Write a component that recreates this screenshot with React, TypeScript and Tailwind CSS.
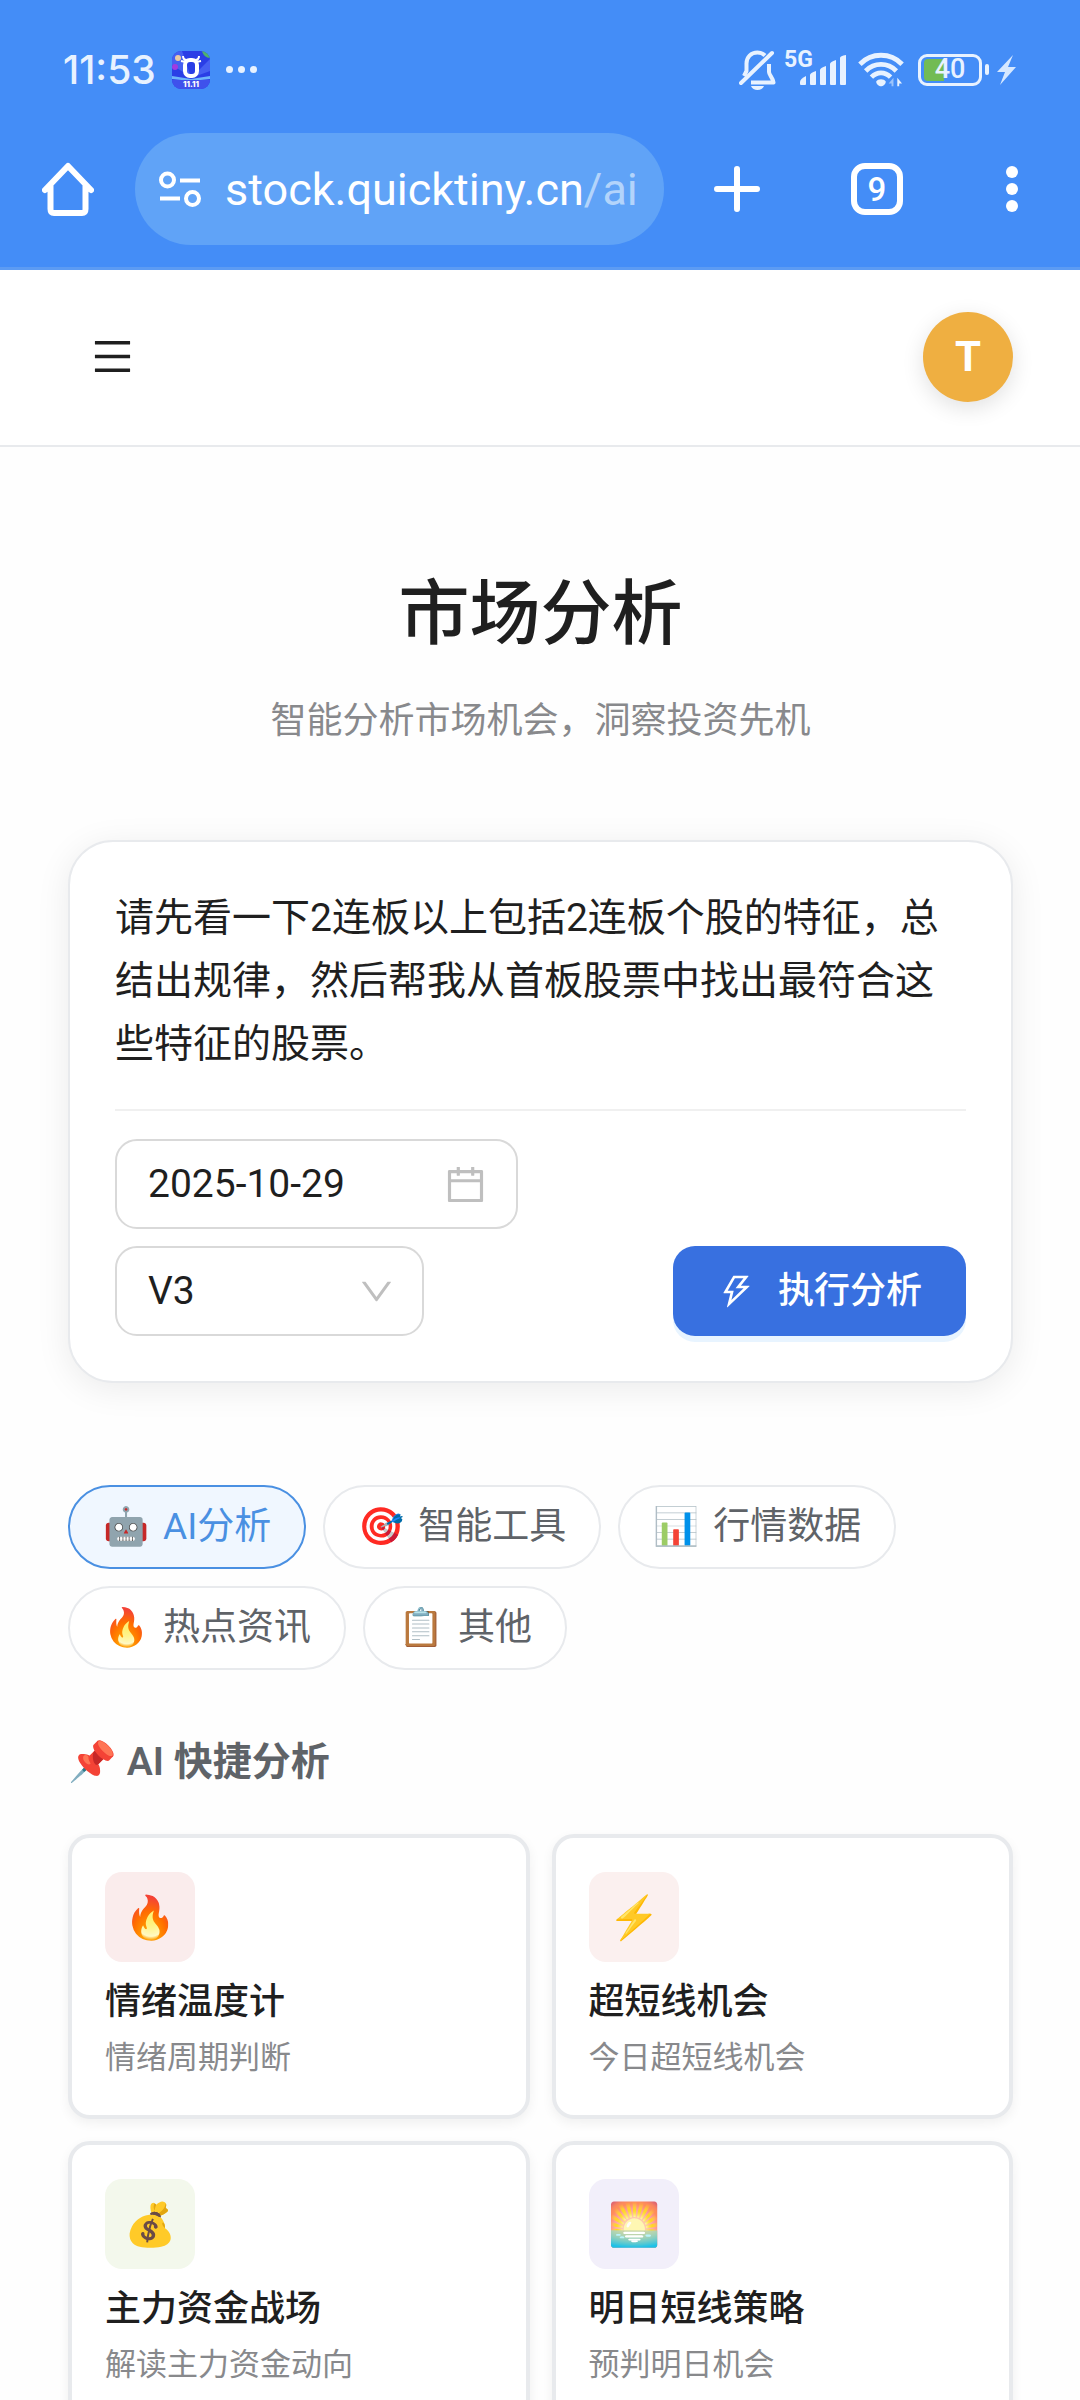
import { useState } from 'react';
import {
  AiOutlineCalendar,
  AiOutlineDown,
  AiOutlineMenu,
  AiOutlineThunderbolt,
} from 'react-icons/ai';

const DEFAULT_PROMPT =
  '请先看一下2连板以上包括2连板个股的特征，总结出规律，然后帮我从首板股票中找出最符合这些特征的股票。';

const tabs = [
  { id: 'ai', emoji: '🤖', label: 'AI分析' },
  { id: 'tools', emoji: '🎯', label: '智能工具' },
  { id: 'market', emoji: '📊', label: '行情数据' },
  { id: 'news', emoji: '🔥', label: '热点资讯' },
  { id: 'other', emoji: '📋', label: '其他' },
];

const cards = [
  { emoji: '🔥', title: '情绪温度计', desc: '情绪周期判断', tint: 'bg-[#faecec]' },
  { emoji: '⚡', title: '超短线机会', desc: '今日超短线机会', tint: 'bg-[#fbf0ef]' },
  { emoji: '💰', title: '主力资金战场', desc: '解读主力资金动向', tint: 'bg-[#f3f8ec]' },
  { emoji: '🌅', title: '明日短线策略', desc: '预判明日机会', tint: 'bg-[#f2effa]' },
];

function AppBadge() {
  return (
    <svg width="38" height="38" viewBox="0 0 38 38" aria-hidden="true">
      <defs>
        <clipPath id="badge">
          <rect width="38" height="38" rx="9" />
        </clipPath>
      </defs>
      <g clipPath="url(#badge)">
        <rect width="38" height="38" fill="#2a3ee6" />
        <path d="M0 0h10l9 26L0 14zM38 8v12L19 27z" fill="#4560f2" />
        <path d="M0 25l19 3 19-3v3l-19 2-19-2z" fill="#6db4fb" />
        <path d="M0 29h38v9H0z" fill="#3f51ec" />
        <path d="M30 0h8v7c-4 0-7-3-8-7z" fill="#4fb06d" />
        <circle cx="6" cy="7" r="3" fill="#e9c9a4" />
        <circle cx="3" cy="16" r="3" fill="#a13be0" />
        <path
          d="M11 5c0 2 1 4 4 4M27 5c0 2-1 4-4 4M9 10l5 1M29 10l-5 1"
          fill="none"
          stroke="#fff"
          strokeWidth="2"
        />
        <rect x="13" y="9" width="12" height="16" rx="5" fill="none" stroke="#fff" strokeWidth="4" />
        <text
          x="19"
          y="36"
          textAnchor="middle"
          fill="#fff"
          fontSize="8"
          fontWeight="800"
          fontFamily="Inter, sans-serif"
        >
          11.11
        </text>
      </g>
    </svg>
  );
}

function BellOff() {
  return (
    <svg width="37" height="40" viewBox="0 0 37 40" fill="none" aria-hidden="true">
      <path
        d="M26 5.500C24 3.500 21.500 2.500 18.500 2.500c-6.500 0-11 4.500-11 11V21L5 26M30 14v8c0 3 4 6 4.500 10.500H12"
        stroke="#e8f2ff"
        strokeWidth="4"
        strokeLinejoin="round"
      />
      <path d="M2 33L33 3" stroke="#e8f2ff" strokeWidth="4" strokeLinecap="round" />
      <path d="M12 36h13c-1 2.600-3.500 4-6.500 4s-5.500-1.400-6.500-4z" fill="#e8f2ff" />
    </svg>
  );
}

function Signal() {
  return (
    <svg width="46" height="32" viewBox="0 0 46 32" fill="#e8f2ff" aria-hidden="true">
      <path d="M0 28q0-3 6-6v8q0 1-1 1H1q-1 0-1-1z" />
      <path d="M10 21q0-2 6-4v13q0 1-1 1h-4q-1 0-1-1z" />
      <path d="M20 16q0-2 6-4v18q0 1-1 1h-4q-1 0-1-1z" />
      <path d="M30 10q0-2 6-4v24q0 1-1 1h-4q-1 0-1-1z" />
      <path d="M40 4q0-2 6-3v29q0 1-1 1h-4q-1 0-1-1z" />
    </svg>
  );
}

function Wifi() {
  return (
    <svg width="46" height="37" viewBox="0 0 48 37" fill="none" aria-hidden="true">
      <g stroke="#e8f2ff" strokeWidth="5">
        <path d="M2 13C14 .500 34 .500 46 13" />
        <path d="M8 20c9-9 23-9 32 0" />
        <path d="M14 26.500c6-6 14-6 20 0" />
      </g>
      <path d="M19 31c2-3 8-3 10 0 0 3-3 5-5 5s-5-2-5-5z" fill="#e8f2ff" />
      <path d="M37 27v9h-2v-3l-3 0z" fill="#9cc4fb" />
      <path d="M41 36v-9l5 6h-3v3z" fill="#e8f2ff" />
    </svg>
  );
}

function Battery() {
  return (
    <div className="flex items-center">
      <div className="relative flex h-8 w-16 items-center justify-center rounded-[9px] border-[3px] border-[#e8f2ff]">
        <span className="absolute inset-y-[2px] left-[3px] w-5 rounded-l-[4px] bg-[#72bb54]" />
        <span className="relative font-[Roboto] text-[27px] leading-none font-medium">40</span>
      </div>
      <span className="ml-[3px] h-[11px] w-1 rounded-full bg-[#e8f2ff]" />
      <svg className="ml-2" width="19" height="30" viewBox="0 0 19 30" aria-hidden="true">
        <path d="M16 0L0 17h8L3 30 19 12h-8z" fill="#d6e8ff" />
      </svg>
    </div>
  );
}

function StatusBar() {
  return (
    <div className="flex h-[133px] items-center justify-between pt-[6px] pr-16 pl-[63px] text-[#e8f2ff]">
      <div className="flex items-center">
        <span className="font-[Inter] text-[39px] leading-none font-medium">11:53</span>
        <span className="ml-4">
          <AppBadge />
        </span>
        <span className="ml-4 flex gap-[5px]">
          <i className="size-[7px] rounded-full bg-[#e8f2ff]" />
          <i className="size-[7px] rounded-full bg-[#e8f2ff]" />
          <i className="size-[7px] rounded-full bg-[#e8f2ff]" />
        </span>
      </div>
      <div className="flex items-center">
        <BellOff />
        <div className="relative ml-6">
          <Signal />
          <span className="absolute -top-[6px] -left-4 font-[Roboto] text-[23px] leading-none font-bold">5G</span>
        </div>
        <span className="ml-3">
          <Wifi />
        </span>
        <span className="ml-[14px]">
          <Battery />
        </span>
      </div>
    </div>
  );
}

function BrowserBar() {
  return (
    <div className="flex items-center pr-[3px] pb-[22px] pl-[42px] text-white">
      <button type="button" aria-label="Home" className="mr-[41px]">
        <svg width="52" height="54" viewBox="0 0 52 54" fill="none" stroke="currentColor" aria-hidden="true">
          <path
            d="M3 28L26 4l23 24M8.500 24v23c0 2.500 1 4 3.500 4h28c2.500 0 3.500-1.500 3.500-4V24"
            strokeWidth="6"
            strokeLinecap="round"
            strokeLinejoin="round"
          />
        </svg>
      </button>
      <button type="button" className="flex h-28 min-w-0 flex-1 items-center rounded-full bg-[#60a3f7] pl-6">
        <svg width="42" height="36" viewBox="0 0 42 36" fill="none" stroke="currentColor" strokeWidth="4" aria-hidden="true">
          <circle cx="8.500" cy="9" r="6.500" />
          <circle cx="33.500" cy="27.500" r="6.500" />
          <path d="M21 9.500h20M1 27.500h20" />
        </svg>
        <span className="ml-6 font-[Roboto] text-[45px] leading-none whitespace-nowrap">
          stock.quicktiny.cn<span className="text-[#b3d4fb]">/ai</span>
        </span>
      </button>
      <button type="button" aria-label="New tab" className="ml-[3px] flex w-[140px] justify-center">
        <svg width="46" height="46" viewBox="0 0 46 46" stroke="currentColor" aria-hidden="true">
          <path d="M3 23h40M23 3v40" strokeWidth="6" strokeLinecap="round" />
        </svg>
      </button>
      <button type="button" aria-label="Tabs" className="flex w-[140px] justify-center">
        <span className="flex size-[52px] items-center justify-center rounded-[14px] border-[6px] border-white font-[Roboto] text-[33px] leading-none font-medium">
          9
        </span>
      </button>
      <button type="button" aria-label="More" className="flex w-[130px] flex-col items-center gap-[5px]">
        <i className="size-3 rounded-full bg-white" />
        <i className="size-3 rounded-full bg-white" />
        <i className="size-3 rounded-full bg-white" />
      </button>
    </div>
  );
}

function SiteHeader() {
  return (
    <header className="flex h-[177px] shrink-0 items-center justify-between border-b-2 border-[#e8eaed] bg-white px-[67px] pb-[2px]">
      <button type="button" aria-label="菜单" className="flex size-[90px] items-center justify-center">
        <AiOutlineMenu className="size-[45px]" />
      </button>
      <button
        type="button"
        className="size-[90px] rounded-full bg-[#efaf41] font-[Roboto] text-[42px] font-bold text-white shadow-[0_6px_22px_rgba(0,0,0,0.12)]"
      >
        T
      </button>
    </header>
  );
}

function AnalysisForm() {
  const [prompt, setPrompt] = useState(DEFAULT_PROMPT);
  const [date, setDate] = useState('2025-10-29');
  const [model, setModel] = useState('V3');

  return (
    <form
      onSubmit={(e) => e.preventDefault()}
      className="mt-[91px] rounded-[45px] border-2 border-[#e8eaed] bg-white p-[45px] shadow-[0_6px_34px_rgba(0,0,0,0.08)]"
    >
      <textarea
        aria-label="分析内容"
        rows={3}
        value={prompt}
        onChange={(e) => setPrompt(e.target.value)}
        className="block w-full resize-none overflow-hidden text-[39px] leading-[63px] outline-none"
      />
      <div className="mt-[33px] flex flex-col items-start gap-[17px] border-t-2 border-[#f0f0f0] pt-7">
        <label className="flex h-[90px] w-[403px] items-center rounded-[22px] border-2 border-[#d9d9d9] pr-7 pl-[31px]">
          <input
            type="text"
            aria-label="日期"
            value={date}
            onChange={(e) => setDate(e.target.value)}
            className="min-w-0 flex-1 text-[39px] outline-none"
          />
          <AiOutlineCalendar className="size-[45px] text-[#bfbfbf]" />
        </label>
        <div className="flex w-full justify-between">
          <div className="relative w-[309px]">
            <select
              aria-label="模型"
              value={model}
              onChange={(e) => setModel(e.target.value)}
              className="h-[90px] w-full appearance-none rounded-[22px] border-2 border-[#d9d9d9] px-[31px] text-[39px] outline-none"
            >
              <option>V3</option>
              <option>R1</option>
            </select>
            <AiOutlineDown className="pointer-events-none absolute top-[26px] right-7 size-[39px] text-[#bfbfbf]" />
          </div>
          <button
            type="submit"
            className="flex h-[90px] items-center gap-[22px] rounded-[22px] bg-[#3870e0] px-[44px] text-[36px] font-medium text-white shadow-[0_6px_0_#e8f4ff]"
          >
            <AiOutlineThunderbolt className="size-[39px]" />
            执行分析
          </button>
        </div>
      </div>
    </form>
  );
}

export default function App() {
  const [active, setActive] = useState('ai');

  return (
    <div className="flex h-screen flex-col bg-[#fefefe] font-[Roboto,'Noto_Sans_CJK_SC',sans-serif] text-[#1f1f1f]">
      <div className="shrink-0 border-b-[3px] border-[#5c9bf3] bg-[#448df7]">
        <StatusBar />
        <BrowserBar />
      </div>
      <SiteHeader />
      <main className="min-h-0 flex-1 overflow-y-auto pt-[124px] pr-[67px] pb-16 pl-[68px] [scrollbar-width:none]">
        <h1 className="text-center text-[71px] leading-[86px] font-medium">市场分析</h1>
        <p className="mt-9 text-center text-[36px] leading-[56px] text-[#88898c]">
          智能分析市场机会，洞察投资先机
        </p>

        <AnalysisForm />

        <div className="mt-[102px] flex flex-wrap gap-[17px]">
          {tabs.map((tab) => (
            <button
              key={tab.id}
              type="button"
              onClick={() => setActive(tab.id)}
              className={`flex h-[84px] items-center gap-[14px] rounded-full border-2 px-[33px] text-[37px] ${
                active === tab.id
                  ? 'border-[#4a90e2] bg-[#f0f7ff] text-[#4a90e2]'
                  : 'border-[#e8eaed] bg-white text-[#5f6368]'
              }`}
            >
              <span>{tab.emoji}</span>
              {tab.label}
            </button>
          ))}
        </div>

        <h2 className="mt-16 text-[39px] leading-[56px] font-semibold text-[#5f6368]">📌 AI 快捷分析</h2>

        <div className="mt-11 grid grid-cols-2 gap-[22px]">
          {cards.map((card) => (
            <button
              key={card.title}
              type="button"
              className="flex flex-col items-start rounded-[22px] border-4 border-[#e8eaed] bg-white px-[33px] py-[34px] text-left shadow-[0_4px_12px_rgba(0,0,0,0.06)]"
            >
              <span className={`flex size-[90px] items-center justify-center rounded-[17px] text-[42px] ${card.tint}`}>
                {card.emoji}
              </span>
              <span className="mt-3 text-[36px] leading-[56px] font-medium">{card.title}</span>
              <span className="mt-[5px] text-[31px] leading-[46px] text-[#88898c]">{card.desc}</span>
            </button>
          ))}
        </div>
      </main>
    </div>
  );
}
